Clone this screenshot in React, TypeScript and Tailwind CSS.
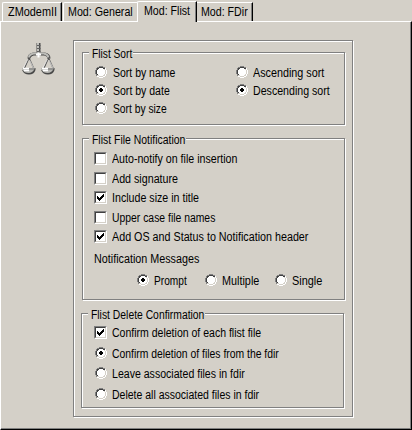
import { useLayoutEffect, useRef, type ReactNode } from 'react';

// Text run condensed horizontally to the given width.
function Label({ text, width, className = '' }: { text: string; width: number; className?: string }) {
  const ref = useRef<HTMLSpanElement>(null);
  useLayoutEffect(() => {
    const el = ref.current;
    if (!el) return;
    el.style.transform = `scaleX(${width / el.offsetWidth})`;
  }, [text, width]);
  return (
    <div className={`h-[14px] shrink-0 ${className}`} style={{ width }}>
      <span ref={ref} className="inline-block origin-left whitespace-pre align-top">
        {text}
      </span>
    </div>
  );
}

const COLORS: Record<string, string> = {
  G: '#808080',
  K: '#404040',
  B: '#000000',
  W: '#ffffff',
  L: '#d4d0c8',
};

function Bitmap({ rows, className = '' }: { rows: string[]; className?: string }) {
  return (
    <svg
      width={rows[0].length}
      height={rows.length}
      shapeRendering="crispEdges"
      className={`block shrink-0 ${className}`}
    >
      {rows.flatMap((row, y) =>
        row.split('').map((c, x) =>
          COLORS[c] ? <rect key={`${x}-${y}`} x={x} y={y} width={1} height={1} fill={COLORS[c]} /> : null,
        ),
      )}
    </svg>
  );
}

const RADIO_OFF = [
  '....GGGG....',
  '..GGKKKKGG..',
  '.GKKWWWWKKW.',
  '.GKWWWWWWLW.',
  'GKWWWWWWWWLW',
  'GKWWWWWWWWLW',
  'GKWWWWWWWWLW',
  'GKWWWWWWWWLW',
  '.GKWWWWWWLW.',
  '.GLLWWWWLLW.',
  '..WWLLLLWW..',
  '....WWWW....',
];

const RADIO_ON = [
  '....GGGG....',
  '..GGKKKKGG..',
  '.GKKWWWWKKW.',
  '.GKWWWWWWLW.',
  'GKWWWBBWWWLW',
  'GKWWBBBBWWLW',
  'GKWWBBBBWWLW',
  'GKWWWBBWWWLW',
  '.GKWWWWWWLW.',
  '.GLLWWWWLLW.',
  '..WWLLLLWW..',
  '....WWWW....',
];

const TICK = ['......B', '.....BB', 'B...BBB', 'BB.BBB.', 'BBBBB..', '.BBB...', '..B....'];

function Radio({ label, width, on = false, gap = 'gap-[6px]' }: { label: string; width: number; on?: boolean; gap?: string }) {
  return (
    <div className={`flex h-[14px] items-start pl-px ${gap}`}>
      <Bitmap rows={on ? RADIO_ON : RADIO_OFF} />
      <Label text={label} width={width} />
    </div>
  );
}

function Check({ label, width, on = false }: { label: string; width: number; on?: boolean }) {
  return (
    <div className="flex h-[14px] items-start gap-[5px]">
      <div className="h-[13px] w-[13px] shrink-0 border border-b-white border-l-[#808080] border-r-white border-t-[#808080]">
        <div className="h-[11px] w-[11px] border border-b-[#d4d0c8] border-l-[#404040] border-r-[#d4d0c8] border-t-[#404040] bg-white p-px">
          {on && <Bitmap rows={TICK} />}
        </div>
      </div>
      <Label text={label} width={width} />
    </div>
  );
}

function Group({ title, width, className, children }: { title: string; width: number; className: string; children: ReactNode }) {
  return (
    <div
      className={`flex flex-col items-start border border-[#808080] shadow-[1px_1px_0_#fff,inset_1px_1px_0_#fff] ${className}`}
    >
      <div className="-mt-[6px] ml-[6px] h-[14px] shrink-0 bg-[#d4d0c8] pl-[3px] pr-px">
        <Label text={title} width={width} />
      </div>
      {children}
    </div>
  );
}

function Scales() {
  return (
    <svg width="35" height="34" viewBox="0 0 35 34" className="block">
      <g fill="none">
        <path d="M17.500 1v10" stroke="#4c4c4c" strokeWidth="4" />
        <path d="M17 1v10" stroke="#c0c0bc" strokeWidth="2" />
        <path d="M16 3.500h3.500M16 6.500h3.500M16 9.500h3.500" stroke="#606060" />
        <path d="M8 16.500q0-3.500 4.500-4.500h11q4.500 1 4.500 4.500" stroke="#484848" strokeWidth="3" />
        <path d="M8 15.500q0-3 4.500-4h10.500q4 1 4.500 4" stroke="#bcbcb8" strokeWidth="2" />
        <path d="M15 12.500h5M17.500 10.500v5" stroke="#fff" strokeWidth="2" />
        <path d="M8 16l-5 11M8 16l5 11M27.500 16l-5 11M27.500 16l5 11" stroke="#505050" strokeWidth="1.300" />
        <path d="M8.500 18l4 8M7 17l-4.500 9M28 18l4 8M26.500 17l-4.500 9" stroke="#fff" strokeWidth=".7" />
      </g>
      {[1, 20].map((x) => (
        <g key={x} transform={`translate(${x} 0)`}>
          <path d="M0 26h13.500v2q-1.500 4.500-6.500 4.500T0 28z" fill="#484848" />
          <path d="M0 26h12.500v1q-2 4-6 4T0 27.500z" fill="#b8b8b4" />
          <path d="M1 26.500h6M2 28.500h5" stroke="#fff" strokeWidth="1.500" />
          <path d="M7 27h5" stroke="#707070" />
        </g>
      ))}
    </svg>
  );
}

export default function App() {
  return (
    <div className="flex h-[430px] w-[412px] flex-col overflow-hidden bg-[#d4d0c8] font-['Liberation_Sans',Arial,sans-serif] text-[12px] leading-[14px] text-black">
      <div className="flex h-[21px] shrink-0 items-end pl-[2px]">
        <div className="h-[19px] w-[60px] rounded-tl-[2px] border-l border-r border-t border-l-white border-r-black border-t-white pl-[5px] pt-[2px] shadow-[inset_-1px_0_0_#808080]">
          <Label text="ZModemII" width={49} />
        </div>
        <div className="ml-px h-[19px] w-[74px] rounded-tl-[2px] border-l border-t border-white pl-[4px] pt-[2px]">
          <Label text="Mod: General" width={65} />
        </div>
        <div className="z-10 -mb-px h-[21px] w-[60px] rounded-tl-[2px] border-l border-r border-t border-l-white border-r-black border-t-white bg-[#d4d0c8] pl-[6px] pt-[2px] shadow-[inset_-1px_0_0_#808080]">
          <Label text="Mod: Flist" width={46} />
        </div>
        <div className="h-[19px] w-[56px] border-r border-t border-r-black border-t-white pl-[4px] pt-[2px] shadow-[inset_-1px_0_0_#808080]">
          <Label text="Mod: FDir" width={47} />
        </div>
      </div>
      <div className="flex h-[409px] border-b border-l border-r border-t border-b-black border-l-white border-r-black border-t-white">
        <div className="flex flex-1 items-start border-b border-r border-[#808080]">
          <div className="w-[72px] shrink-0 pl-[20px] pt-[20px]">
            <Scales />
          </div>
          <div className="mt-[18px] h-[377px] w-[280px] shrink-0 border border-[#808080] pl-[7px] pt-[11px] shadow-[1px_1px_0_#fff,inset_1px_1px_0_#fff]">
            <Group title="Flist Sort" width={40} className="ml-px h-[73px] w-[263px]">
              <div className="mt-[5px] flex pl-[11px]">
                <div className="flex w-[141px] flex-col gap-[4px]">
                  <Radio label="Sort by name" width={62} />
                  <Radio label="Sort by date" width={57} on />
                  <Radio label="Sort by size" width={54} />
                </div>
                <div className="flex flex-col gap-[4px]">
                  <Radio label="Ascending sort" width={71} gap="gap-[5px]" />
                  <Radio label="Descending sort" width={77} gap="gap-[5px]" on />
                </div>
              </div>
            </Group>
            <Group title="Flist File Notification" width={93} className="ml-px mt-[13px] h-[162px] w-[263px]">
              <div className="mt-[5px] flex flex-col pl-[11px]">
                <Check label="Auto-notify on file insertion" width={125} />
                <div className="mt-[6px]"><Check label="Add signature" width={66} /></div>
                <div className="mt-[5px]"><Check label="Include size in title" width={87} on /></div>
                <div className="mt-[6px]"><Check label="Upper case file names" width={103} /></div>
                <div className="mt-[5px]"><Check label="Add OS and Status to Notification header" width={196} on /></div>
                <Label text="Notification Messages" width={105} className="mt-[8px]" />
                <div className="mt-[8px] flex pl-[42px]">
                  <div className="w-[68px]"><Radio label="Prompt" width={33} gap="gap-[5px]" on /></div>
                  <div className="w-[70px]"><Radio label="Multiple" width={37} gap="gap-[5px]" /></div>
                  <Radio label="Single" width={30} gap="gap-[5px]" />
                </div>
              </div>
            </Group>
            <Group title="Flist Delete Confirmation" width={113} className="mt-[13px] h-[95px] w-[263px]">
              <div className="mt-[4px] flex flex-col pl-[12px]">
                <Check label="Confirm deletion of each flist file" width={149} on />
                <div className="mt-[7px]"><Radio label="Confirm deletion of files from the fdir" width={167} gap="gap-[5px]" on /></div>
                <div className="mt-[6px]"><Radio label="Leave associated files in fdir" width={133} gap="gap-[5px]" /></div>
                <div className="mt-[7px]"><Radio label="Delete all associated files in fdir" width={147} gap="gap-[5px]" /></div>
              </div>
            </Group>
          </div>
        </div>
      </div>
    </div>
  );
}
